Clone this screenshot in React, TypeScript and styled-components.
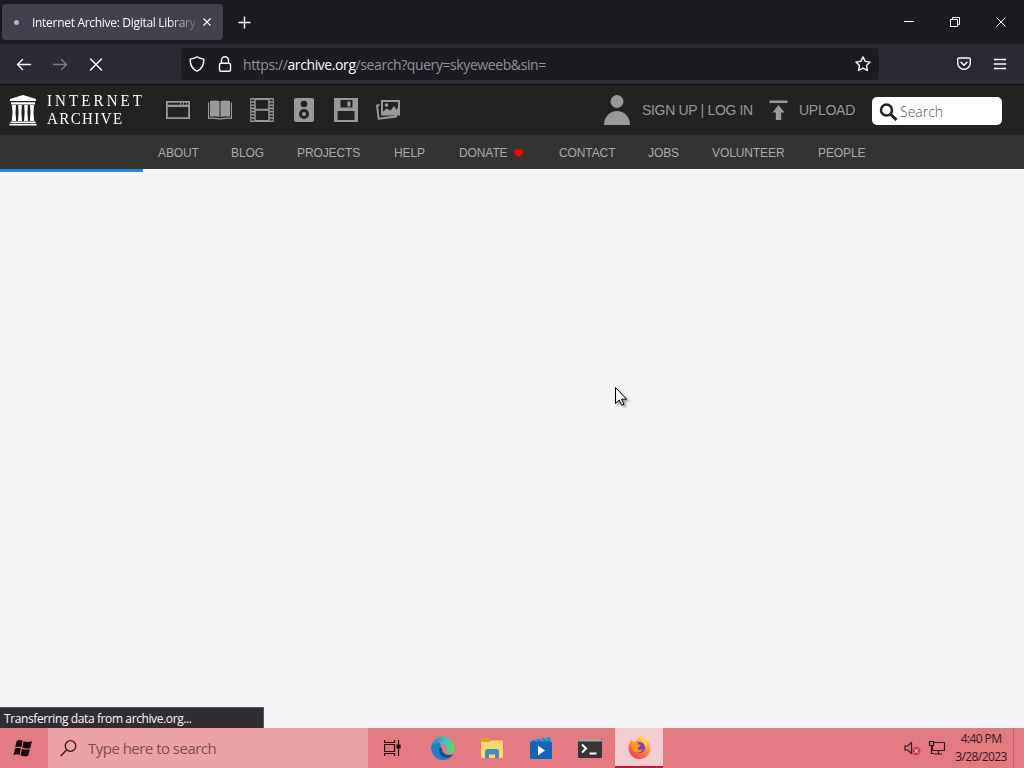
import styled, { createGlobalStyle } from 'styled-components';

const GlobalStyle = createGlobalStyle`
  * {
    box-sizing: border-box;
  }

  body {
    margin: 0;
    overflow: hidden;
  }

  svg {
    display: block;
    flex-shrink: 0;
  }
`;

const systemFont = "'Open Sans', 'Noto Sans', sans-serif";

const StyledDesktop = styled.div`
  position: relative;
  width: 1024px;
  height: 768px;

  display: flex;
  flex-direction: column;

  background: #f5f5f7;
  font-family: ${systemFont};
`;

const StyledTitleBar = styled.div`
  height: 44px;
  padding: 0 0 0 2px;

  display: flex;
  align-items: center;

  background: #1c1b22;
  color: #fbfbfe;
`;

const StyledTab = styled.div`
  width: 221px;
  height: 36px;
  padding: 0 10px 0 12px;

  display: flex;
  align-items: center;

  background: #42414d;
  border-radius: 4px;
`;

const StyledTabDot = styled.span`
  width: 5px;
  height: 5px;
  margin-right: 13px;

  border-radius: 50%;
  background: #b5b4bf;
`;

const StyledTabTitle = styled.div`
  width: 166px;
  margin-right: 5px;

  overflow: hidden;
  white-space: nowrap;
  font-size: 12px;
  letter-spacing: -0.3px;
  mask-image: linear-gradient(to right, #000 136px, transparent 170px);
`;

const StyledNewTab = styled.div`
  margin-left: 15px;
`;

const StyledWindowControls = styled.div`
  margin-left: auto;

  display: flex;

  & > * {
    width: 46px;
    display: flex;
    justify-content: center;
  }
`;

const StyledToolbar = styled.div`
  height: 40px;
  padding-left: 6px;

  display: flex;
  align-items: center;

  background: #2b2a33;
  color: #fbfbfe;
`;

const StyledToolButton = styled.div<{ $dim?: boolean }>`
  width: 36px;

  display: flex;
  justify-content: center;

  opacity: ${({ $dim }) => ($dim ? 0.4 : 1)};
`;

const StyledUrlBar = styled.div`
  width: 698px;
  height: 32px;
  margin: 0 67px 0 67px;
  padding: 0 8px;

  display: flex;
  align-items: center;
  gap: 12px;

  background: #1c1b22;
  border-radius: 4px;

  & > svg:last-child {
    margin-left: auto;
  }
`;

const StyledUrl = styled.div`
  margin-left: -2px;
  padding-top: 1px;

  color: #93929c;
  font-size: 14px;
  letter-spacing: -0.41px;
  white-space: nowrap;

  & > b {
    color: #fbfbfe;
    font-weight: 400;
  }
`;

const StyledSiteHeader = styled.div`
  height: 51px;
  padding-left: 9px;

  display: flex;
  align-items: center;

  border-top: 1px solid #0d0c10;
  background: #222;
  color: #999;
  font-family: 'Liberation Sans', Arial, sans-serif;
`;

const StyledWordmark = styled.div`
  width: 120px;
  padding-left: 10px;

  color: #fff;
  font-family: 'Liberation Serif', serif;
  font-size: 15px;
  line-height: 15px;
  white-space: nowrap;
  transform: scaleY(1.17);
`;

const StyledWordmarkLine = styled.div<{ $spacing: number }>`
  letter-spacing: ${({ $spacing }) => $spacing}px;
`;

const StyledMediaIcons = styled.div`
  display: flex;

  & > * {
    width: 42px;
    display: flex;
    justify-content: center;
  }
`;

const StyledAccount = styled.div`
  margin-left: auto;
  margin-right: 22px;

  display: flex;
  align-items: center;

  font-size: 14px;
  white-space: nowrap;
`;

const StyledSignUp = styled.span`
  width: 111px;
  margin: 0 16px 0 12px;
  letter-spacing: -0.33px;
`;

const StyledUpload = styled.span`
  width: 57px;
  margin: 0 16px 0 11px;
  letter-spacing: -0.25px;
`;

const StyledSiteSearch = styled.div`
  width: 130px;
  height: 28px;
  margin-top: 2px;
  padding-left: 7px;

  display: flex;
  align-items: center;
  gap: 2px;

  background: #fff;
  border-radius: 5px;
  color: #555;
  font-family: ${systemFont};
  font-size: 14px;
  font-weight: 300;
`;

const StyledSiteNav = styled.div`
  height: 34px;
  padding: 1px 0 0 158px;

  display: flex;
  align-items: center;
  gap: 33px;

  background: #333;
  color: #aaa;
  font-family: 'Liberation Sans', Arial, sans-serif;
  font-size: 12px;
  letter-spacing: -0.1px;
  white-space: nowrap;
`;

const StyledNavItem = styled.div<{ $width: number }>`
  width: ${({ $width }) => $width}px;

  display: flex;
  align-items: center;
  gap: 5px;
`;

const StyledContent = styled.div`
  flex: 1;

  display: flex;
  flex-direction: column;
  justify-content: space-between;

  border-top: 1px solid #fff;
`;

const StyledProgress = styled.div`
  width: 143px;
  height: 3px;
  margin-top: -1px;

  background: #2489dc;
`;

const StyledStatus = styled.div`
  width: 264px;
  height: 21px;
  padding: 2px 0 0 4px;

  border-top: 1px solid #55545c;
  border-right: 1px solid #55545c;
  background: #2e2d32;
  color: #fbfbfe;
  font-size: 12px;
  line-height: 18px;
  letter-spacing: -0.39px;
  white-space: nowrap;
`;

const StyledTaskbar = styled.div`
  height: 40px;

  display: flex;
  align-items: stretch;

  background: #e27a80;
  color: #431c20;
`;

const StyledTaskButton = styled.div<{ $width?: number; $active?: boolean }>`
  width: ${({ $width = 49 }) => $width}px;

  display: flex;
  justify-content: center;
  align-items: center;

  background: ${({ $active }) => ($active ? '#f1ced0' : 'none')};
  border-bottom: ${({ $active }) => ($active ? '2px solid #b91f35' : 'none')};
`;

const StyledTaskSearch = styled.div`
  width: 320px;
  padding-left: 12px;

  display: flex;
  align-items: center;
  gap: 11px;

  background: #eba3a7;
  color: #834a50;
  font-size: 15px;
  letter-spacing: -0.52px;
`;

const StyledTray = styled.div`
  margin-left: auto;

  display: flex;
  align-items: center;
  gap: 7px;
`;

const StyledClock = styled.div`
  width: 54px;
  margin: 0 5px 0 8px;
  padding-top: 2px;

  color: #35171a;
  font-size: 12px;
  line-height: 18px;
  letter-spacing: -0.6px;
  text-align: center;
  white-space: nowrap;
`;

const StyledShowDesktop = styled.div`
  width: 11px;
  height: 40px;

  border-left: 1px solid #c4646b;
`;

const StyledCursor = styled.svg`
  position: absolute;
  left: 614px;
  top: 386px;

  filter: drop-shadow(2px 2px 1px rgba(0, 0, 0, 0.35));
`;

const line = { fill: 'none', stroke: 'currentColor' };

const Cross = ({ size, weight = 1.3 }: { size: number; weight?: number }) => (
  <svg width={size} height={size} {...line} strokeWidth={weight}>
    <path d={`M.5 .5L${size - 0.5} ${size - 0.5}M${size - 0.5} .5L.5 ${size - 0.5}`} />
  </svg>
);

const TitleBar = () => (
  <StyledTitleBar>
    <StyledTab>
      <StyledTabDot />
      <StyledTabTitle>Internet Archive: Digital Library</StyledTabTitle>
      <Cross size={8} weight={1.1} />
    </StyledTab>
    <StyledNewTab>
      <svg width='13' height='13' {...line} strokeWidth='1.4'>
        <path d='M6.5 .5v12M.5 6.5h12' />
      </svg>
    </StyledNewTab>
    <StyledWindowControls>
      <div>
        <svg width='10' height='10' {...line}>
          <path d='M0 4.5h10' />
        </svg>
      </div>
      <div>
        <svg width='10' height='10' {...line}>
          <path d='M.5 2.5h7v7h-7zM2.5 2.5v-2h7v7h-2' />
        </svg>
      </div>
      <div>
        <Cross size={10} weight={1} />
      </div>
    </StyledWindowControls>
  </StyledTitleBar>
);

const Toolbar = () => (
  <StyledToolbar>
    <StyledToolButton>
      <svg width='16' height='16' {...line} strokeWidth='1.4' strokeLinecap='round' strokeLinejoin='round'>
        <path d='M14.500 8.500H1.500M6.500 3.500L1.500 8.500L6.500 13.500' />
      </svg>
    </StyledToolButton>
    <StyledToolButton $dim>
      <svg width='16' height='16' {...line} strokeWidth='1.4' strokeLinecap='round' strokeLinejoin='round'>
        <path d='M1.500 8.500h13M9.500 3.500l5 5l-5 5' />
      </svg>
    </StyledToolButton>
    <StyledToolButton>
      <svg width='14' height='14' {...line} strokeWidth='1.4' strokeLinecap='round'>
        <path d='M1.500 2l11 11M12.500 2l-11 11' />
      </svg>
    </StyledToolButton>
    <StyledUrlBar>
      <svg width='16' height='16' {...line} strokeWidth='1.4' strokeLinejoin='round'>
        <path d='M8 .8C6.500 2 4 2.700 1.200 3.100C1 8.800 2.800 13 8 15.200C13.200 13 15 8.800 14.800 3.100C12 2.700 9.500 2 8 .8z' />
      </svg>
      <svg width='16' height='16' {...line} strokeWidth='1.4'>
        <rect x='2.500' y='7.300' width='11' height='8' rx='1.500' />
        <path d='M4.500 7V4.200a3.500 3.500 0 0 1 7 0V7' />
      </svg>
      <StyledUrl>
        https://<b>archive.org</b>/search?query=skyeweeb&amp;sin=
      </StyledUrl>
      <svg width='16' height='16' {...line} strokeWidth='1.4' strokeLinejoin='round'>
        <path d='M8 .9l2.200 4.500l4.900.7l-3.600 3.500l.9 4.900L8 12.200l-4.400 2.300l.9-4.900L.9 6.100l4.900-.7z' />
      </svg>
    </StyledUrlBar>
    <StyledToolButton>
      <svg width='14' height='14' {...line} strokeWidth='1.4' strokeLinecap='round' strokeLinejoin='round'>
        <path d='M2 1h10q1.300 0 1.300 1.300V6a6.300 6.300 0 0 1-12.600 0V2.300Q.7 1 2 1zM4 5.200l3 3l3-3' />
      </svg>
    </StyledToolButton>
    <StyledToolButton>
      <svg width='12' height='12' {...line} strokeWidth='1.3'>
        <path d='M0 1.500h12M0 6h12M0 10.500h12' />
      </svg>
    </StyledToolButton>
  </StyledToolbar>
);

const SiteHeader = () => (
  <StyledSiteHeader>
    <svg width='28' height='32' fill='#fff'>
      <path d='M14 1L27 5v2H1V5zM2 8.200h24v2.300H2zM1.500 27.500h25V29h-25zM.5 29.800h27V31.500H.5z' />
      <path d='M3 11h4l-.5 8 .7 8H2.800l.7-8zM9.200 11h3.600l-.4 8 .6 8H9l.6-8zM15.200 11h3.600l-.4 8 .6 8h-4l.6-8zM21 11h4l-.5 8 .7 8h-4.400l.7-8z' />
    </svg>
    <StyledWordmark>
      <StyledWordmarkLine $spacing={3.1}>INTERNET</StyledWordmarkLine>
      <StyledWordmarkLine $spacing={1.4}>ARCHIVE</StyledWordmarkLine>
    </StyledWordmark>
    <StyledMediaIcons>
      <div>
        <svg width='24' height='24' fill='currentColor'>
          <path fillRule='evenodd' d='M0 3h24v18H0zM1.800 9h20.400V19.200H1.800zM1.800 4.700h12.400v2H1.800zM15.200 4.700h2v2h-2zM18 4.700h2v2h-2zM20.700 4.700h1.700v2h-1.700z' />
        </svg>
      </div>
      <div>
        <svg width='24' height='24' fill='currentColor'>
          <path d='M2 3Q7 1.800 11.500 3v16Q7 17.800 2 18.800zM22 3Q17 1.800 12.500 3v16Q17 17.800 22 18.800z' />
          <path d='M0 4.500h1.100v15.200Q7 19 11 20.200h2Q17 19 22.900 19.700V4.500H24v16.500Q17 20.300 13.500 21.500h-3Q7 20.300 0 21z' />
        </svg>
      </div>
      <div>
        <svg width='24' height='24' {...line}>
          <path d='M5 .5v23M19 .5v23' strokeWidth='1.500' />
          <path d='M5 1h14M5 11.800h14M5 23h14' strokeWidth='2' />
          <path d='M2.700 0v24M21.300 0v24' strokeWidth='3.500' strokeDasharray='1.600 1.600' />
          <path d='M.7 0v24M23.300 0v24' strokeWidth='1' />
        </svg>
      </div>
      <div>
        <svg width='24' height='24'>
          <rect x='2' width='20' height='24' rx='2' fill='currentColor' />
          <circle cx='12' cy='6' r='3.300' fill='#222' />
          <circle cx='12' cy='16' r='5' fill='#222' />
          <circle cx='12' cy='16' r='2' fill='currentColor' />
        </svg>
      </div>
      <div>
        <svg width='24' height='24' fill='currentColor'>
          <path fillRule='evenodd' d='M0 0h24v24H0zM6.500 2v7.500h12V2zM3.500 13v9h17v-9z' />
          <path d='M13.300 3.500h3.200v5h-3.200z' />
        </svg>
      </div>
      <div>
        <svg width='24' height='24'>
          <path d='M3.500 7L1 7.500l1.600 13.200L20 18.500V17' fill='none' stroke='currentColor' strokeWidth='2' />
          <path d='M6 3h17v13.500H6z' fill='#222' stroke='currentColor' strokeWidth='2' />
          <circle cx='10.500' cy='7' r='1.800' fill='currentColor' />
          <path d='M7 16.500v-3l3.500-3l4 2L18 8l2.500 4L23 7v9.500z' fill='currentColor' />
        </svg>
      </div>
    </StyledMediaIcons>
    <StyledAccount>
      <svg width='26' height='32' fill='currentColor'>
        <circle cx='13' cy='7.500' r='6.500' />
        <path d='M0 31a13 14 0 0 1 26 0z' />
      </svg>
      <StyledSignUp>SIGN UP | LOG IN</StyledSignUp>
      <svg width='19' height='20' fill='currentColor'>
        <path d='M.5 .5h18V3h-18zM9.500 5l6 7.500h-3.300V20H6.800v-7.500H3.500z' />
      </svg>
      <StyledUpload>UPLOAD</StyledUpload>
      <StyledSiteSearch>
        <svg width='19' height='20' fill='none' stroke='#222'>
          <circle cx='7.500' cy='9' r='5.500' strokeWidth='2.500' />
          <path d='M11.500 13L17.500 19' strokeWidth='3' />
        </svg>
        Search
      </StyledSiteSearch>
    </StyledAccount>
  </StyledSiteHeader>
);

const navItems = [
  { label: 'ABOUT', width: 40 },
  { label: 'BLOG', width: 33 },
  { label: 'PROJECTS', width: 64 },
  { label: 'HELP', width: 32 },
  { label: 'DONATE', width: 67, heart: true },
  { label: 'CONTACT', width: 56 },
  { label: 'JOBS', width: 31 },
  { label: 'VOLUNTEER', width: 73 },
  { label: 'PEOPLE', width: 48 },
];

const SiteNav = () => (
  <StyledSiteNav>
    {navItems.map(({ label, width, heart }) => (
      <StyledNavItem key={label} $width={width}>
        {label}
        {heart && (
          <svg width='11' height='10' fill='#f00'>
            <path d='M5.500 9.300L1.500 6.300Q.1 4 1.200 2.300Q3 .5 5.500 1.800Q8 .5 9.800 2.300Q10.900 4 9.500 6.300z' />
          </svg>
        )}
      </StyledNavItem>
    ))}
  </StyledSiteNav>
);

const EdgeIcon = () => (
  <svg width='24' height='24'>
    <defs>
      <linearGradient id='edgeTop' x1='0' y1='.2' x2='1' y2='.5'>
        <stop offset='0' stopColor='#1689d6' />
        <stop offset='.5' stopColor='#2fc2d8' />
        <stop offset='1' stopColor='#63d957' />
      </linearGradient>
    </defs>
    <path d='M.2 10.500C2 7 6 6 9.500 7.500L10 14C11 19 16 21 22 18.500C19.500 22.500 16 24 12 24A12 12 0 0 1 .2 10.500z' fill='#1a80cf' />
    <path d='M8.500 11.500C7 16.500 10 21 14.500 21.500C17.500 21.800 20.500 20.500 22.300 18.200C17 20.500 10.500 18 10.800 12z' fill='#124b92' />
    <path d='M.2 10.800A12 12 0 0 1 24 12c0 4-3 5.800-6 5.800-2.500 0-4-.8-3.500-2C18 11 13.500 7 8.500 7 4 7 1.200 8.500 .2 10.800z' fill='url(#edgeTop)' />
  </svg>
);

const FirefoxIcon = () => (
  <svg width='23' height='23'>
    <defs>
      <linearGradient id='fox' x1='.8' y1='0' x2='.2' y2='1'>
        <stop offset='0' stopColor='#ffe03a' />
        <stop offset='.5' stopColor='#ff8a2a' />
        <stop offset='1' stopColor='#f5315e' />
      </linearGradient>
    </defs>
    <path d='M13.500 0c2 1.500 3 3 3.500 4.500l1.500-.7C21 6 22.500 9 22.500 12A11 11 0 0 1 .5 12C.5 8.500 2 5.500 4 3.500L5 6l3-.7C9 3 11 1 13.500 0z' fill='url(#fox)' />
    <circle cx='11.500' cy='11.500' r='5.500' fill='#7540d6' />
    <path d='M3 7c3-2 6-1 7.500 1.200L13 9c-1 2-3 1.600-3.500 3.200C10 14 13 14.500 15 13c-1 4-8 5-10.500.5z' fill='#ff9a25' />
    <path d='M12 3c2 2 5 4 5 8l2-3-2-4-3.500-4z' fill='#ffd83b' />
  </svg>
);

const Clock = () => (
  <StyledClock>
    <div>4:40 PM</div>
    <div>3/28/2023</div>
  </StyledClock>
);

const Taskbar = () => (
  <StyledTaskbar>
    <StyledTaskButton $width={48}>
      <svg width='22' height='20' fill='#0d0506'>
        <path d='M3.700 3Q6.500 1.200 9.700 2.800L8.200 9.200Q5 7.800 2.200 9.500zM10.700 3.300Q14 4.800 19 3.200L17.200 10Q13 11.300 9.200 9.600zM2 10.600Q5 9 8 10.400L6.500 16.800Q3.500 15.500 .5 17.200zM9 10.900Q12.500 12.300 16.800 11.200L15.200 17.700Q11 19 7.500 17.300z' />
      </svg>
    </StyledTaskButton>
    <StyledTaskSearch>
      <svg width='17' height='17' fill='none' stroke='#35171a' strokeWidth='1.300'>
        <circle cx='10.500' cy='6' r='5.300' />
        <path d='M6.800 9.800L.7 16' />
      </svg>
      Type here to search
    </StyledTaskSearch>
    <StyledTaskButton>
      <svg width='17' height='16' fill='none' stroke='#1f0b0d' strokeWidth='1.200'>
        <path d='M.5 4.500h10v7H.5zM.5 0v2.500h10V0M.5 16v-2.500h10V16M14.500 0v16' />
        <path d='M13 5h3v3h-3z' fill='#1f0b0d' />
      </svg>
    </StyledTaskButton>
    <StyledTaskButton $width={51}>
      <EdgeIcon />
    </StyledTaskButton>
    <StyledTaskButton $width={48}>
      <svg width='24' height='20'>
        <path d='M1 0h8l2 2.500h12V6H1z' fill='#dfa02a' />
        <path d='M1 4h8l2-1.500h12V20H1z' fill='#ffd96b' />
        <path d='M5 20v-6.500Q5 11 7.500 11h9q2.500 0 2.500 2.500V20h-4v-3.500H9V20z' fill='#3c91c4' />
      </svg>
    </StyledTaskButton>
    <StyledTaskButton>
      <svg width='22' height='22'>
        <path d='M1 3.500L20 0l.8 5L1 7z' fill='#1e88ce' />
        <path d='M5 3l2.500 2M10 2l2.500 2M15 1l2.500 2' stroke='#6fbbe6' />
        <rect y='4.500' width='22' height='17.500' rx='1.500' fill='#0f66b8' />
        <path d='M8 8.500v10l7-5z' fill='#fff' />
      </svg>
    </StyledTaskButton>
    <StyledTaskButton $width={50}>
      <svg width='24' height='20'>
        <rect y='1' width='24' height='19' rx='1.500' fill='#353535' />
        <path d='M0 3.500V2.500Q0 1 1.500 1h21Q24 1 24 2.500v1z' fill='#a7a3a4' />
        <path d='M4 6.500l4 4l-4 4M11.500 15.500h7' fill='none' stroke='#fff' strokeWidth='2' />
      </svg>
    </StyledTaskButton>
    <StyledTaskButton $width={48} $active>
      <FirefoxIcon />
    </StyledTaskButton>
    <StyledTray>
      <svg width='17' height='16' fill='none' stroke='#35171a'>
        <path d='M1 6h2.500l4-3.500v11L3.500 10H1z' strokeWidth='1.200' />
        <circle cx='12.300' cy='11' r='4.200' fill='#d13e49' stroke='none' />
        <path d='M10.500 9.200l3.600 3.600M14.100 9.200l-3.600 3.600' stroke='#fff' />
      </svg>
      <svg width='18' height='16' fill='none' stroke='#35171a' strokeWidth='1.200'>
        <path d='M6 2.500h10.500v8h-12V6M10.500 10.500v3M7 14h7M1.500 1.500h4v4h-4zM3.500 5.500v8h3' />
      </svg>
    </StyledTray>
    <Clock />
    <StyledShowDesktop />
  </StyledTaskbar>
);

export default function App() {
  return (
    <StyledDesktop>
      <GlobalStyle />
      <TitleBar />
      <Toolbar />
      <SiteHeader />
      <SiteNav />
      <StyledContent>
        <StyledProgress />
        <StyledStatus>Transferring data from archive.org...</StyledStatus>
      </StyledContent>
      <Taskbar />
      <StyledCursor width='13' height='21'>
        <path d='M1.500 1.500v16l3.700-3.500l2.500 5.300l2.300-1.100l-2.400-5h5z' fill='#fff' stroke='#000' />
      </StyledCursor>
    </StyledDesktop>
  );
}
